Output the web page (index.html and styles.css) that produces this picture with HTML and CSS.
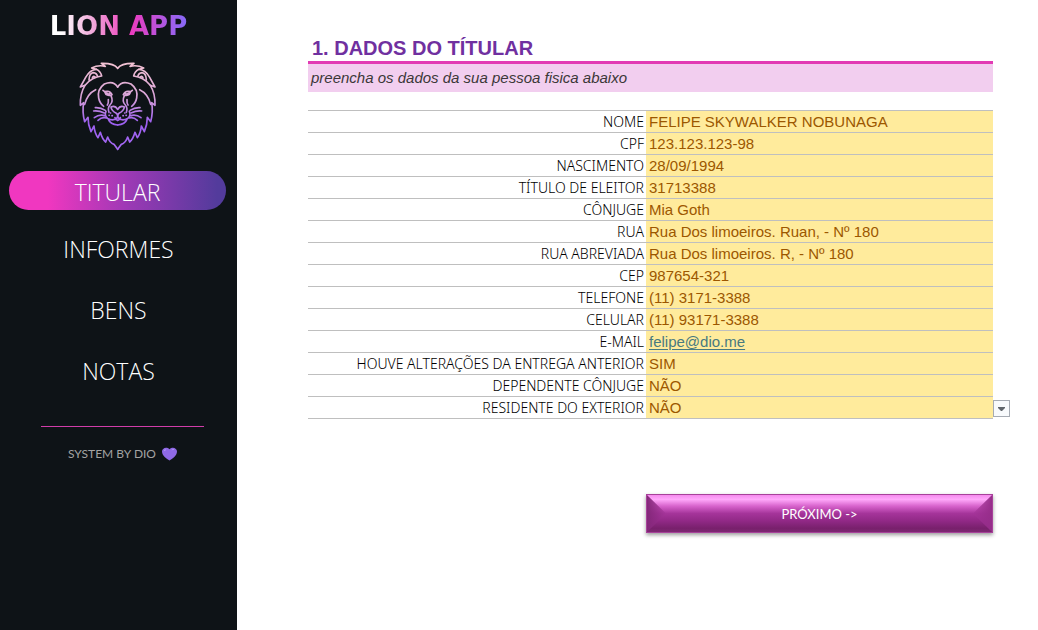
FILE: index.html
```html
<!DOCTYPE html>
<html lang="pt-BR">
<head>
<meta charset="utf-8">
<meta name="viewport" content="width=device-width, initial-scale=1">
<title>Lion App</title>
<link rel="stylesheet" href="styles.css">
</head>
<body>
<div class="app">
  <aside class="sidebar">
    <div class="brand">LION APP</div>
    <svg class="lion" viewBox="0 0 288 300" role="img" aria-label="Leão">
      <defs>
        <linearGradient id="mane" gradientUnits="userSpaceOnUse" x1="0" y1="25" x2="0" y2="285">
          <stop offset="0" stop-color="#f3c3d3"/>
          <stop offset=".4" stop-color="#d9a3d8"/>
          <stop offset=".7" stop-color="#9c5ff0"/>
          <stop offset="1" stop-color="#a468f2"/>
        </linearGradient>
        <g id="half">
          <path d="M143 43Q132 27 94 28L106 37Q84 32 65 42L79 46Q60 47 47 70L31 99L45 94Q30 118 31 154L41 146Q36 174 44 203L54 190Q54 213 63 233L72 216Q74 238 84 251L91 235Q97 256 107 264L113 249Q119 267 132 271L143 286"/>
          <path d="M79 46Q92 52 95 66Q66 69 46 93M57 77Q58 57 70 56Q80 57 83 68M67 72Q69 64 75 69M77 107Q52 119 44 151"/>
          <path d="M143 99Q130 78 103 90Q81 106 86 132Q89 148 101 157M104 113Q120 108 126 122Q109 129 104 113M110 116Q116 124 120 118M104 113L99 109M123 125Q131 143 120 153Q112 162 117 175"/>
          <path d="M143 166Q135 153 123 159Q124 170 139 178L143 182M115 137Q116 148 112 153M143 181V190Q130 204 113 193Q102 185 108 172M114 194Q121 212 143 213M135 191Q137 198 143 199"/>
          <path d="M106 169Q92 160 76 161M103 177Q86 169 71 171M104 185Q88 180 73 191M109 192Q96 188 84 199M121 177h1M126 185h1M117 184h1"/>
        </g>
      </defs>
      <g fill="none" stroke="url(#mane)" stroke-width="5" stroke-linejoin="round" stroke-linecap="round">
        <use href="#half"/>
        <use href="#half" transform="translate(286 0) scale(-1 1)"/>
      </g>
    </svg>
    <nav class="menu">
      <a class="menu-item active" href="#titular" aria-current="page">TITULAR</a>
      <a class="menu-item" href="#informes">INFORMES</a>
      <a class="menu-item" href="#bens">BENS</a>
      <a class="menu-item" href="#notas">NOTAS</a>
    </nav>
    <div class="credit">
      <span>SYSTEM BY DIO</span>
      <svg class="heart" viewBox="0 0 16 14" aria-hidden="true">
        <path fill="#8f69e6" d="M8 14C5 12 0 9 0 4.400C0 1 4.500-1.500 8 2C11.500-1.500 16 1 16 4.400C16 9 11 12 8 14Z"/>
        <path fill="#b49af5" d="M2 4Q2 2 4 2Q5 3 2 4M10 3Q12 1 13 2Q13 3 10 3"/>
      </svg>
    </div>
  </aside>
  <main class="content">
    <h1 class="title">1. DADOS DO TÍTULAR</h1>
    <p class="hint">preencha os dados da sua pessoa fisica abaixo</p>
    <form>
      <table class="sheet">
        <colgroup><col class="col-label"><col></colgroup>
        <tbody>
          <tr><th scope="row"><label for="nome">NOME</label></th><td><input id="nome" type="text" value="FELIPE SKYWALKER NOBUNAGA"></td></tr>
          <tr><th scope="row"><label for="cpf">CPF</label></th><td><input id="cpf" type="text" value="123.123.123-98"></td></tr>
          <tr><th scope="row"><label for="nascimento">NASCIMENTO</label></th><td><input id="nascimento" type="text" value="28/09/1994"></td></tr>
          <tr><th scope="row"><label for="titulo">TÍTULO DE ELEITOR</label></th><td><input id="titulo" type="text" value="31713388"></td></tr>
          <tr><th scope="row"><label for="conjuge">CÔNJUGE</label></th><td><input id="conjuge" type="text" value="Mia Goth"></td></tr>
          <tr><th scope="row"><label for="rua">RUA</label></th><td><input id="rua" type="text" value="Rua Dos limoeiros. Ruan, - Nº 180"></td></tr>
          <tr><th scope="row"><label for="abreviada">RUA ABREVIADA</label></th><td><input id="abreviada" type="text" value="Rua Dos limoeiros. R, - Nº 180"></td></tr>
          <tr><th scope="row"><label for="cep">CEP</label></th><td><input id="cep" type="text" value="987654-321"></td></tr>
          <tr><th scope="row"><label for="telefone">TELEFONE</label></th><td><input id="telefone" type="text" value="(11) 3171-3388"></td></tr>
          <tr><th scope="row"><label for="celular">CELULAR</label></th><td><input id="celular" type="text" value="(11) 93171-3388"></td></tr>
          <tr><th scope="row">E-MAIL</th><td><a class="mail" href="mailto:felipe@dio.me">felipe@dio.me</a></td></tr>
          <tr><th scope="row"><label for="alteracoes">HOUVE ALTERAÇÕES DA ENTREGA ANTERIOR</label></th><td><input id="alteracoes" type="text" value="SIM"></td></tr>
          <tr><th scope="row"><label for="dependente">DEPENDENTE CÔNJUGE</label></th><td><input id="dependente" type="text" value="NÃO"></td></tr>
          <tr><th scope="row"><label for="exterior">RESIDENTE DO EXTERIOR</label></th><td class="choice"><select id="exterior"><option>SIM</option><option selected>NÃO</option></select><svg class="arrow" viewBox="0 0 17 17" aria-hidden="true"><rect x=".5" y=".5" width="16" height="16" fill="#f8fafc" stroke="#a6abb3"/><path fill="#60656b" d="M5 7h7v1L9 11H8L5 8z"/></svg></td></tr>
        </tbody>
      </table>
      <div class="actions"><button class="next" type="submit">PRÓXIMO -&gt;</button></div>
    </form>
  </main>
</div>
</body>
</html>
```
FILE: styles.css
```css
* { box-sizing: border-box; }

body {
  margin: 0;
  background: #fff;
  font-family: "Liberation Sans", Arial, sans-serif;
}

.app {
  display: flex;
  min-height: 100vh;
}

.sidebar {
  flex: 0 0 237px;
  display: flex;
  flex-direction: column;
  align-items: center;
  padding: 8px 9px;
  background: #0e1317;
}

.brand {
  font: 700 26px/36px "DejaVu Sans", sans-serif;
  background: linear-gradient(90deg, #fff 8%, #f0a5d8 32%, #ee3bbd 58%, #8b68f6 98%);
  -webkit-background-clip: text;
  background-clip: text;
  color: transparent;
}

.lion {
  width: 96px;
  height: 100px;
  margin: 10px 2px 0 0;
}

.menu {
  align-self: stretch;
  margin-top: 17px;
}

.menu-item {
  display: block;
  height: 39px;
  margin-bottom: 22px;
  padding-top: 2px;
  border-radius: 20px;
  color: #fff;
  font: 300 23px/39px "Open Sans", sans-serif;
  text-align: center;
  text-decoration: none;
}

.active {
  margin: 0 2px 18px 0;
  background: linear-gradient(90deg, #f037c0 18%, #9c39b5 55%, #533b9c 96%);
}

.credit {
  display: flex;
  justify-content: center;
  align-items: center;
  gap: 6px;
  width: 163px;
  margin: 15px 0 0 8px;
  padding-top: 18px;
  border-top: 1px solid #d13daa;
  color: #a3a3a3;
  font: 12px/18px Lato, sans-serif;
}

.heart {
  width: 15px;
  height: 14px;
}

.content {
  flex: 1;
  min-width: 0;
  padding: 36px 45px 24px 71px;
}

.title {
  margin: 0;
  padding-left: 4px;
  border-bottom: 3px solid #e23bb4;
  color: #7030a0;
  font-size: 20px;
  line-height: 25px;
}

.hint {
  margin: 0 0 18px;
  padding-left: 3px;
  background: #f2ceef;
  color: #3b3838;
  font-size: 15px;
  font-style: italic;
  line-height: 28px;
}

.sheet {
  width: 100%;
  table-layout: fixed;
  border-collapse: collapse;
  border-top: 1px solid #bfbfbf;
}

.col-label { width: 338px; }

.sheet tr {
  height: 22px;
  border-bottom: 1px solid #bfbfbf;
}

.sheet th {
  padding: 0 2px 0 0;
  color: #000;
  font: 300 14px/21px "Noto Sans", sans-serif;
  text-align: right;
  white-space: nowrap;
}

.sheet td {
  padding: 0;
  background: #ffeb9c;
  color: #9c5700;
  font-size: 15px;
  line-height: 21px;
}

.sheet input,
.sheet select {
  display: block;
  width: 100%;
  height: 21px;
  margin: 0;
  padding: 0 3px;
  border: 0;
  background: transparent;
  color: inherit;
  font: inherit;
}

.sheet .choice { position: relative; }

.sheet select {
  width: calc(100% + 17px);
  appearance: none;
}

.arrow {
  position: absolute;
  left: 100%;
  top: 3px;
  width: 17px;
  height: 17px;
  pointer-events: none;
}

.mail {
  display: block;
  padding-left: 3px;
  color: #487a80;
  text-underline-offset: 2px;
}

.actions {
  margin-top: 75px;
  padding-left: 338px;
}

.next {
  position: relative;
  display: block;
  width: 100%;
  height: 39px;
  border: 1px solid #a7429a;
  background: linear-gradient(#f58aee, #ffa8fa 12%, #d763cc 30%, #a5349a 50%, #912986 70%, #78206c 90%, #7d2872);
  box-shadow: 0 2px 4px #0006;
  color: #fff;
  font: 13px/18px Lato, sans-serif;
}

.next::before,
.next::after {
  content: "";
  position: absolute;
  top: 0;
  bottom: 0;
  width: 19px;
}

.next::before {
  left: 0;
  background: linear-gradient(90deg, #84277a, #a5349a88);
  clip-path: polygon(0 0, 100% 50%, 0 100%);
}

.next::after {
  right: 0;
  background: linear-gradient(270deg, #962d8a, #a5349a88);
  clip-path: polygon(100% 0, 0 50%, 100% 100%);
}
```
